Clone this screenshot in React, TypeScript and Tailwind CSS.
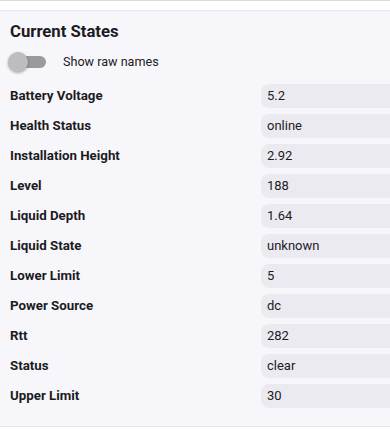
const states: [string, string][] = [
  ['Battery Voltage', '5.2'],
  ['Health Status', 'online'],
  ['Installation Height', '2.92'],
  ['Level', '188'],
  ['Liquid Depth', '1.64'],
  ['Liquid State', 'unknown'],
  ['Lower Limit', '5'],
  ['Power Source', 'dc'],
  ['Rtt', '282'],
  ['Status', 'clear'],
  ['Upper Limit', '30'],
]

export default function App() {
  return (
    <div className="h-[433px] w-[390px] overflow-hidden bg-white font-['Roboto',sans-serif] text-[#1c1b1f]">
      <div className="h-[1px] bg-[#dcdcdc]" />
      <div className="h-[9px]" />
      <section className="border-y border-[#e6e6ec] bg-[#f7f7fb] pb-[15px] pl-[10px] pt-[10px]">
        <h2 className="text-[16.7px] font-bold leading-[22px]">Current States</h2>
        <div className="mt-[9px] flex h-[20px] items-center">
          <div className="relative h-[20px] w-[36px] shrink-0">
            <div className="absolute left-[4px] top-[4px] h-[12px] w-[32px] rounded-full bg-[#9a9a9e]" />
            <div className="absolute left-[-2px] top-0 h-[20px] w-[20px] rounded-full bg-[#bdbdbf] shadow-[0_1px_3px_rgba(0,0,0,0.35)]" />
          </div>
          <span className="ml-[17px] text-[12.6px] leading-[16px]">Show raw names</span>
        </div>
        <div className="mt-[9px] flex flex-col">
          {states.map(([label, value]) => (
            <div key={label} className="flex h-[30px] items-center">
              <div className="w-[251px] shrink-0 text-[13.3px] font-bold leading-[16px]">{label}</div>
              <div className="flex h-[24px] w-[200px] shrink-0 items-center rounded-[8px] bg-[#ebeaf0] pl-[6px] text-[13px] leading-[16px]">
                {value}
              </div>
            </div>
          ))}
        </div>
      </section>
    </div>
  )
}
